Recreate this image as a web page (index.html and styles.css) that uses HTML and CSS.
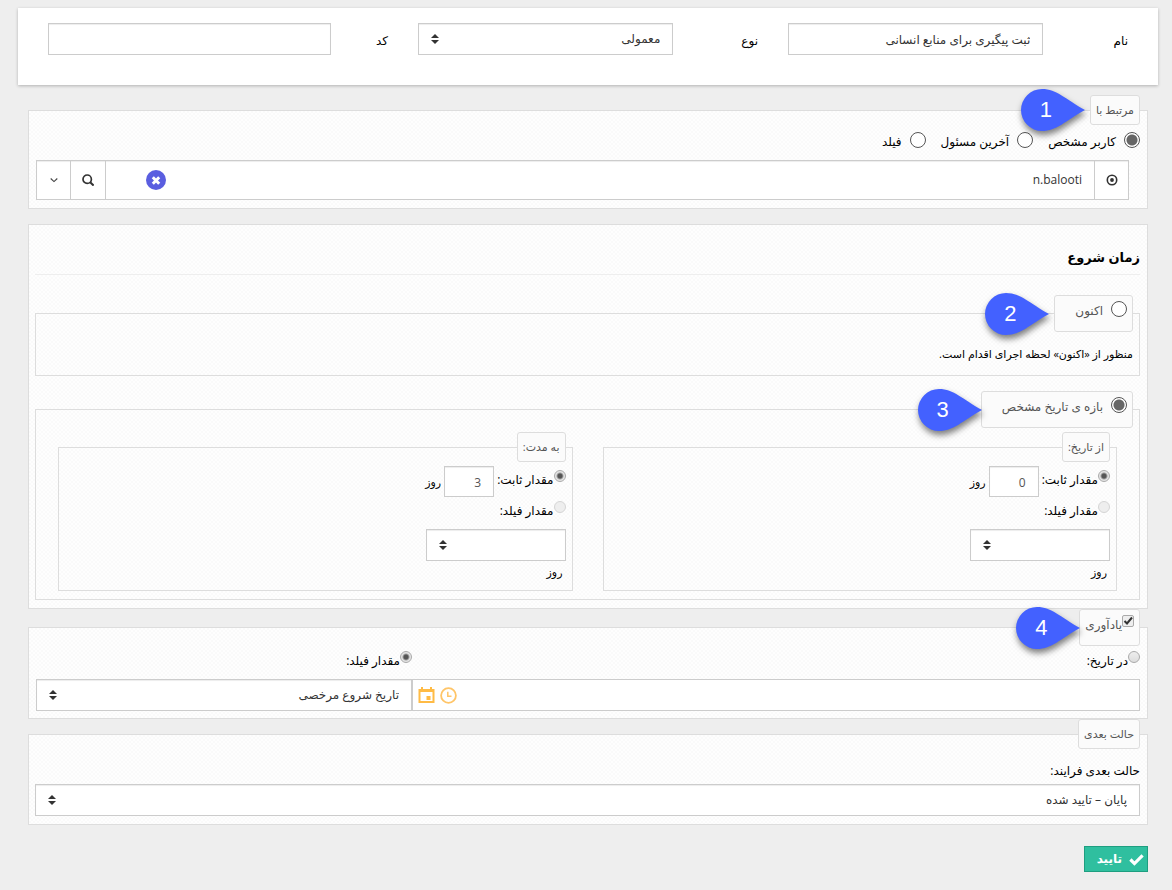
FILE: index.html
```html
<!DOCTYPE html>
<html lang="fa" dir="rtl">
<head>
<meta charset="utf-8">
<title>ثبت پیگیری</title>
<meta name="viewport" content="width=device-width, initial-scale=1">
<link rel="stylesheet" href="styles.css">
</head>
<body>
<form class="page">
  <section class="card">
    <div class="field"><label for="name">نام</label><input class="control" id="name" type="text" value="ثبت پیگیری برای منابع انسانی"></div>
    <div class="field"><label for="kind">نوع</label><select class="control" id="kind"><option>معمولی</option></select></div>
    <div class="field field-wide"><label for="code">کد</label><input class="control" id="code" type="text"></div>
  </section>

  <div class="content">
    <fieldset class="box box-related">
      <legend>مرتبط با
        <span class="callout"><svg viewBox="0 0 64 42" aria-hidden="true"><path d="M21 0C36 0 44 10 64 21C44 32 36 42 21 42A21 21 0 0 1 21 0Z"/></svg><b>1</b></span>
      </legend>
      <div class="choices">
        <label><input class="radio" type="radio" name="rel" checked><span>کاربر مشخص</span></label>
        <label><input class="radio" type="radio" name="rel"><span>آخرین مسئول</span></label>
        <label><input class="radio" type="radio" name="rel"><span>فیلد</span></label>
      </div>
      <div class="picker">
        <span class="cell"><svg class="icon" viewBox="0 0 12 12" aria-hidden="true"><circle cx="6" cy="6" r="4.7" fill="none" stroke="#333" stroke-width="1.6"/><circle cx="6" cy="6" r="1.9" fill="#333"/></svg></span>
        <input class="picker-input" type="text" value="n.balooti" aria-label="کاربر">
        <button class="clear" type="button" aria-label="پاک کردن"><svg viewBox="0 0 20 20" aria-hidden="true"><circle cx="10" cy="10" r="10" fill="#5a5ee0"/><path d="M6.800 7.300L13.200 13.700M13.200 7.300L6.800 13.700" stroke="#fff" stroke-width="3"/></svg></button>
        <button class="cell" type="button" aria-label="جستجو"><svg class="icon" viewBox="0 0 12 12" aria-hidden="true"><circle cx="5.2" cy="5.2" r="4.2" fill="none" stroke="#333" stroke-width="1.7"/><path d="M8.2 8.2L11.6 11.6" stroke="#333" stroke-width="2"/></svg></button>
        <button class="cell cell-end" type="button" aria-label="باز کردن"><svg class="icon" viewBox="0 0 12 12" aria-hidden="true"><path d="M2.7 4.5L6 7.6L9.3 4.5" fill="none" stroke="#444" stroke-width="1.1"/></svg></button>
      </div>
    </fieldset>

    <section class="panel">
      <h2>زمان شروع</h2>
      <fieldset class="sub sub-now">
        <legend class="tall"><label><input class="radio" type="radio" name="start"><span>اکنون</span></label>
          <span class="callout"><svg viewBox="0 0 64 42" aria-hidden="true"><path d="M21 0C36 0 44 10 64 21C44 32 36 42 21 42A21 21 0 0 1 21 0Z"/></svg><b>2</b></span>
        </legend>
        <p>منظور از «اکنون» لحظه اجرای اقدام است.</p>
      </fieldset>
      <fieldset class="sub sub-range">
        <legend class="tall"><label><input class="radio" type="radio" name="start" checked><span>بازه ی تاریخ مشخص</span></label>
          <span class="callout"><svg viewBox="0 0 64 42" aria-hidden="true"><path d="M21 0C36 0 44 10 64 21C44 32 36 42 21 42A21 21 0 0 1 21 0Z"/></svg><b>3</b></span>
        </legend>
        <div class="spans">
          <fieldset class="span">
            <legend>از تاریخ:</legend>
            <div class="amount"><label><input class="radio small" type="radio" name="from" checked><span>مقدار ثابت:</span></label><input class="number" type="text" value="0" aria-label="روز"><span class="unit">روز</span></div>
            <label class="by-field"><input class="radio small" type="radio" name="from" disabled><span>مقدار فیلد:</span></label>
            <select class="control short" aria-label="فیلد"><option></option></select>
            <span class="unit-below">روز</span>
          </fieldset>
          <fieldset class="span">
            <legend>به مدت:</legend>
            <div class="amount"><label><input class="radio small" type="radio" name="dur" checked><span>مقدار ثابت:</span></label><input class="number" type="text" value="3" aria-label="روز"><span class="unit">روز</span></div>
            <label class="by-field"><input class="radio small" type="radio" name="dur" disabled><span>مقدار فیلد:</span></label>
            <select class="control short" aria-label="فیلد"><option></option></select>
            <span class="unit-below">روز</span>
          </fieldset>
        </div>
      </fieldset>
    </section>

    <fieldset class="box box-reminder">
      <legend class="tall tight"><label><input class="check" type="checkbox" checked><span>یادآوری</span></label>
        <span class="callout"><svg viewBox="0 0 64 42" aria-hidden="true"><path d="M21 0C36 0 44 10 64 21C44 32 36 42 21 42A21 21 0 0 1 21 0Z"/></svg><b>4</b></span>
      </legend>
      <div class="reminder">
        <div class="reminder-date">
          <label class="by-field"><input class="radio small" type="radio" name="rem"><span>در تاریخ:</span></label>
          <div class="date"><input type="text" aria-label="تاریخ">
            <button type="button" aria-label="ساعت"><svg viewBox="0 0 17 17" aria-hidden="true"><circle cx="8.5" cy="8.5" r="7.4" fill="none" stroke="#ffc568" stroke-width="1.8"/><path d="M7.8 4.8V9.3H11.5" fill="none" stroke="#ffc568" stroke-width="1.5"/></svg></button>
            <button type="button" aria-label="تقویم"><svg viewBox="0 0 17 17" aria-hidden="true"><path d="M1.5 3H15.500V15H1.5Z" fill="none" stroke="#ffbb45" stroke-width="2"/><path d="M1 2H16V5H1ZM3 0H5V3H3ZM12 0H14V3H12ZM8.500 9H12.500V13H8.500Z" fill="#ffbb45"/></svg></button>
          </div>
        </div>
        <div class="reminder-field">
          <label class="by-field"><input class="radio small" type="radio" name="rem" checked><span>مقدار فیلد:</span></label>
          <select class="control" aria-label="مقدار فیلد"><option>تاریخ شروع مرخصی</option></select>
        </div>
      </div>
    </fieldset>

    <fieldset class="box box-next">
      <legend>حالت بعدی</legend>
      <label class="next-label" for="next">حالت بعدی فرایند:</label>
      <select class="control" id="next"><option>پایان – تایید شده</option></select>
    </fieldset>

    <button class="submit" type="button"><svg viewBox="0 0 16 13" aria-hidden="true"><path d="M1.500 6.500L5.800 10.800L14.500 2" fill="none" stroke="#fff" stroke-width="3.400"/></svg>تایید</button>
  </div>
</form>
</body>
</html>
```
FILE: styles.css
```css
* { box-sizing: border-box; }

body {
  margin: 0;
  background: #eee;
  color: #000;
  font: 12px/20px "Open Sans", "DejaVu Sans", sans-serif;
}

input, select, button { font: inherit; color: #333; }
fieldset { margin: 0; min-width: 0; border: 1px solid #ddd; }
p, h2 { margin: 0; }

.page { padding: 8px 14px 18px 18px; }

.card {
  display: grid;
  grid-template-columns: repeat(3, 1fr);
  padding: 15px 0 30px 30px;
  background: #fff;
  box-shadow: 0 1px 3px rgba(0, 0, 0, .25);
}

.field { display: flex; align-items: center; }
.field label { flex: 0 0 31%; padding: 4px 30px 0 0; }
.field-wide label { flex-basis: 87px; }

.control {
  width: 100%;
  height: 32px;
  min-width: 0;
  padding: 0 12px;
  border: 1px solid #ccc;
  border-radius: 0;
  background-color: #fff;
  box-shadow: inset 0 1px 1px rgba(0, 0, 0, .075);
  appearance: none;
}

select.control {
  background-image: url("data:image/svg+xml,%3Csvg xmlns='http://www.w3.org/2000/svg' viewBox='0 0 8 10'%3E%3Cpath d='M4 0L8 4H0ZM4 10L8 6H0Z' fill='%23333'/%3E%3C/svg%3E");
  background-repeat: no-repeat;
  background-position: 12px center;
  background-size: 8px 10px;
}

.content { padding: 10px 10px 0; }

.box, .panel {
  border: 1px solid #ddd;
  background: #fff repeating-conic-gradient(#fafafa 0 25%, #fefefe 0 50%) 0 0 / 4px 4px;
}

legend {
  position: relative;
  height: 30px;
  padding: 0 5px;
  border: 1px solid #ddd;
  border-radius: 3px;
  background: #fbfbfb;
  color: #555;
  font-size: 11px;
  line-height: 28px;
}

legend.tall { height: 37px; padding: 5px 5px 0; font-size: 12px; line-height: 20px; }
legend.tall label { display: flex; gap: 8px; }
legend.tall label span { padding-right: 0; padding-left: 15px; }
legend.tight label { gap: 0; }
legend.tight label span { padding-left: 0; }

.callout {
  position: absolute;
  top: 50%;
  right: calc(100% + 6px);
  width: 64px;
  height: 42px;
  margin-top: -21px;
  direction: ltr;
}
.callout svg { display: block; fill: #4361ff; overflow: visible; filter: drop-shadow(1px 4px 3px rgba(0, 0, 0, .5)); }
.callout b {
  position: absolute;
  top: 0;
  left: 0;
  width: 50px;
  color: #fff;
  font: 22px/42px "Liberation Sans", sans-serif;
  text-align: center;
}
.tight .callout, .sub-range .callout { right: 100%; }

.radio, .check {
  flex: none;
  width: 16px;
  height: 16px;
  margin: 0;
  border: 1px solid #555;
  border-radius: 50%;
  background: #fff;
  appearance: none;
}
.radio:checked { background: radial-gradient(circle, #666 5px, #fff 6px); }
.radio.small { width: 12px; height: 12px; border-color: #aaa; background: linear-gradient(#eee, #ddd); }
.radio.small:checked { background: radial-gradient(circle, #555 2px, #e5e5e5 4px); }
.radio.small:disabled { border-color: #d5d5d5; background: #eee; }
.check {
  width: 12px;
  height: 12px;
  border-color: #aaa;
  border-radius: 2px;
  background: #eee url("data:image/svg+xml,%3Csvg xmlns='http://www.w3.org/2000/svg' viewBox='0 0 10 10'%3E%3Cpath d='M1.500 5L4 7.500L9 1.500' fill='none' stroke='%23333' stroke-width='2'/%3E%3C/svg%3E");
}

.box-related { padding: 7px 7px 8px; }
.choices { display: flex; gap: 15px; }
.choices label { display: flex; gap: 8px; }

.picker {
  display: flex;
  height: 40px;
  margin: 8px 11px 0 0;
  border: 1px solid #ccc;
  background: #fff;
  box-shadow: inset 0 1px 1px rgba(0, 0, 0, .075);
}
.picker-input { flex: 1; min-width: 0; padding: 0 12px; border: 0; background: none; }
.cell {
  display: grid;
  place-items: center;
  flex: 0 0 34px;
  padding: 0;
  border: 0;
  border-left: 1px solid #ccc;
  background: none;
}
button.cell { flex-basis: 35px; border: 0; border-right: 1px solid #ccc; }
button.cell-end { flex-basis: 34px; }
.icon { width: 12px; height: 12px; }
.clear { width: 20px; margin-left: 40px; padding: 0; border: 0; background: none; }
.clear svg { display: block; width: 20px; height: 20px; }

.panel { margin-top: 15px; padding: 20px 7px 8px 6px; }
.panel h2 {
  padding-bottom: 4px;
  border-bottom: 1px solid #eee;
  font-size: 13px;
  line-height: 25px;
}

.sub { padding: 12px 6px 11px; }
.sub p { font-size: 11px; }
.sub-now { margin-top: 20px; }
.sub-range { margin-top: 15px; padding: 4px 6px 8px; }

.spans { display: grid; grid-template-columns: 1fr 1fr; gap: 30px; padding: 0 16px; }
.span { padding: 4px 6px 8px; }
.amount { display: flex; align-items: center; gap: 3px; }
.amount label { display: flex; padding-bottom: 3px; }
.number {
  width: 50px;
  height: 31px;
  padding: 2px 12px 0;
  border: 1px solid #ccc;
  box-shadow: inset 0 1px 1px rgba(0, 0, 0, .075);
  color: #555;
}
.unit, .unit-below { font-size: 11px; }
.unit-below { display: block; padding: 1px 3px 0; line-height: 20px; }
.by-field { display: flex; padding-top: 4px; }
.short { display: block; width: 140px; margin-top: 8px; }

.box-reminder { padding: 1px 7px 7px; }
.reminder { display: grid; grid-template-columns: 728fr 376fr; }
.reminder .control, .date { margin-top: 8px; }
.date {
  display: flex;
  align-items: center;
  gap: 5px;
  height: 32px;
  padding-left: 5px;
  border: 1px solid #ccc;
  background: #fff;
}
.date input { flex: 1; min-width: 0; border: 0; background: none; }
.date button { width: 17px; height: 17px; padding: 0; border: 0; background: none; }
.date svg { display: block; }

.box-next { padding: 12px 7px 8px 6px; }
.next-label { display: block; padding-bottom: 3px; }

.submit {
  display: flex;
  align-items: center;
  gap: 7px;
  height: 26px;
  margin-top: 21px;
  padding: 0 3px 0 12px;
  border: 1px solid #1e9e80;
  background: #2fbf9f;
  color: #fff;
  font-weight: bold;
}
.submit svg { width: 15px; height: 13px; }
```
